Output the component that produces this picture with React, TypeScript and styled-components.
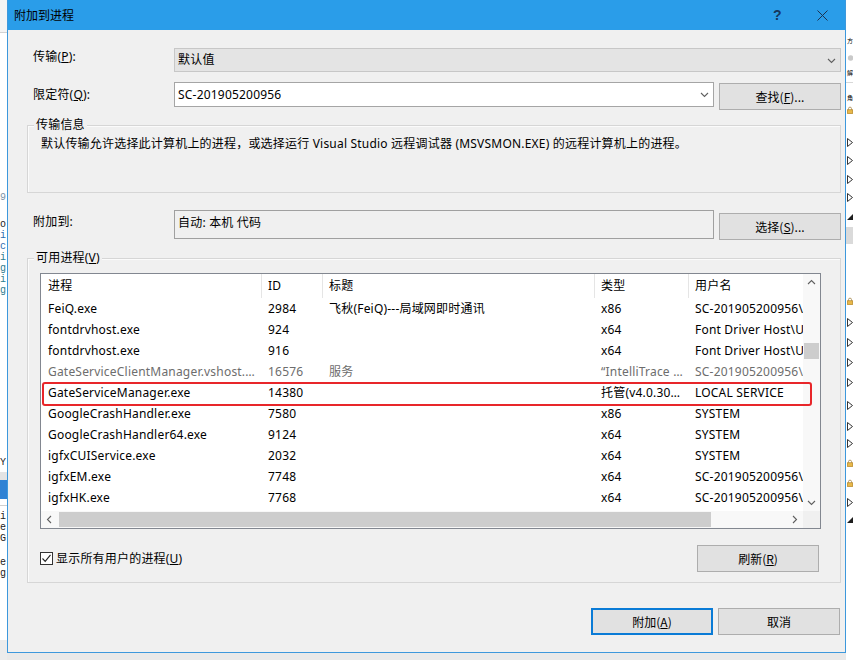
import React from "react";
import styled, { createGlobalStyle } from "styled-components";

const GlobalStyle = createGlobalStyle`
  html, body { margin: 0; padding: 0; }
  body {
    width: 853px;
    height: 660px;
    overflow: hidden;
    background: #e9e9e9;
    font-family: "Noto Sans", "Noto Sans CJK SC", sans-serif;
    font-size: 12px;
    line-height: 16px;
    letter-spacing: 0.2px;
    color: #000;
  }
`;

const Screen = styled.div`
  display: flex;
  align-items: flex-start;
  width: 853px;
  height: 660px;
`;

/* background windows peeking out on both sides */
const Strip = styled.div<{ $w: number }>`
  width: ${(p) => p.$w}px;
  height: 660px;
  background: #fff;
  overflow: hidden;
  display: flex;
  flex-direction: column;
  flex-shrink: 0;
`;

const StripBand = styled.div<{ $mt: number; $h: number; $bg: string }>`
  margin-top: ${(p) => p.$mt}px;
  height: ${(p) => p.$h}px;
  background: ${(p) => p.$bg};
  flex-shrink: 0;
`;

const CodeLine = styled.div<{ $mt: number; $h: number; $color: string }>`
  margin-top: ${(p) => p.$mt}px;
  height: ${(p) => p.$h}px;
  line-height: ${(p) => p.$h}px;
  font-family: "Liberation Mono", monospace;
  font-size: 10px;
  letter-spacing: 0;
  color: ${(p) => p.$color};
  white-space: nowrap;
  flex-shrink: 0;
`;

const TreeGlyph = styled.div<{ $mt: number; $h: number }>`
  margin-top: ${(p) => p.$mt}px;
  height: ${(p) => p.$h}px;
  display: flex;
  align-items: center;
  padding-left: 1px;
  font-family: "Noto Sans CJK SC", sans-serif;
  font-size: 6px;
  letter-spacing: 0;
  white-space: nowrap;
  flex-shrink: 0;
`;

const Dialog = styled.div`
  width: 839px;
  height: 653px;
  box-sizing: border-box;
  border: 1px solid #3d98dc;
  border-top: none;
  background: #f0f0f0;
  display: flex;
  flex-direction: column;
  flex-shrink: 0;
`;

const TitleBar = styled.div`
  height: 30px;
  background: #2a9de9;
  display: flex;
  align-items: center;
`;

const TitleText = styled.div`
  flex: 1;
  padding-left: 6px;
  font-family: "Noto Sans CJK SC", sans-serif;
  font-size: 12px;
  letter-spacing: 0;
  color: #000;
`;

const CaptionButton = styled.div`
  width: 45px;
  height: 30px;
  display: flex;
  align-items: center;
  justify-content: center;
  color: #16365c;
  font-family: "Liberation Sans", sans-serif;
  font-weight: bold;
  font-size: 14px;
`;

const Body = styled.div`
  display: flex;
  flex-direction: column;
  padding: 0 4px 0 19px;
`;

const FieldRow = styled.div<{ $mt: number }>`
  display: flex;
  align-items: flex-start;
  margin-top: ${(p) => p.$mt}px;
  gap: 5px;
`;

const FieldLabel = styled.div<{ $mt: number }>`
  width: 136px;
  padding-left: 6px;
  margin-top: ${(p) => p.$mt}px;
  flex-shrink: 0;
`;

const Combo = styled.div<{ $disabled?: boolean; $h: number }>`
  flex: 1;
  height: ${(p) => p.$h}px;
  box-sizing: border-box;
  border: 1px solid ${(p) => (p.$disabled ? "#c7c7c7" : "#a5a5a5")};
  background: ${(p) => (p.$disabled ? "#e4e4e4" : "#fff")};
  display: flex;
  align-items: center;
  justify-content: space-between;
  padding: 0 4px 0 3px;
`;

const ReadOnlyBox = styled.div`
  flex: 1;
  height: 29px;
  box-sizing: border-box;
  border: 1px solid #a0a0a0;
  background: #f0f0f0;
  padding: 4px 3px;
`;

const Button = styled.div<{ $default?: boolean; $mt?: number }>`
  width: 122px;
  height: 27px;
  margin-top: ${(p) => p.$mt ?? 0}px;
  box-sizing: border-box;
  border: ${(p) => (p.$default ? "2px solid #0a7bd6" : "1px solid #adadad")};
  background: #e1e1e1;
  display: flex;
  align-items: center;
  justify-content: center;
  flex-shrink: 0;
  font-family: "Noto Sans CJK SC", sans-serif;
  letter-spacing: 0;
`;

const Key = styled.span`
  text-decoration: underline;
  text-underline-offset: 1px;
`;

const Group = styled.div<{ $mt: number; $h?: number }>`
  position: relative;
  margin-top: ${(p) => p.$mt}px;
  ${(p) => (p.$h ? `height: ${p.$h}px;` : "")}
  box-sizing: border-box;
  border: 1px solid #d6d6d6;
  box-shadow: inset 1px 1px 0 #fbfbfb;
`;

const Legend = styled.div`
  position: absolute;
  top: -9px;
  left: 6px;
  padding: 0 2px;
  background: #f0f0f0;
`;

const InfoText = styled.div`
  padding: 10px 0 0 13px;
`;

const ProcGroupInner = styled.div`
  display: flex;
  flex-direction: column;
  padding: 14px 19px 10px 12px;
`;

const ListBox = styled.div`
  position: relative;
  height: 256px;
  box-sizing: border-box;
  border: 1px solid #828790;
  background: #fff;
  display: grid;
  grid-template-columns: 1fr 17px;
  grid-template-rows: 1fr 17px;
`;

const ListContent = styled.div`
  overflow: hidden;
`;

const COLS = "220px 61px 272px 94px 115px";

const HeaderRow = styled.div`
  display: grid;
  grid-template-columns: ${COLS};
  height: 24px;
`;

const HeaderCell = styled.div<{ $sep: boolean }>`
  display: flex;
  align-items: center;
  padding-left: ${(p) => (p.$sep ? 6 : 7)}px;
  border-left: ${(p) => (p.$sep ? "1px solid #e5e5e5" : "none")};
  white-space: nowrap;
  overflow: hidden;
`;

const DataRow = styled.div<{ $dim?: boolean }>`
  display: grid;
  grid-template-columns: ${COLS};
  height: 21px;
  color: ${(p) => (p.$dim ? "#6d6d6d" : "#000")};
`;

const Cell = styled.div`
  display: flex;
  align-items: center;
  padding-left: 7px;
  white-space: nowrap;
  overflow: hidden;
`;

const VScroll = styled.div`
  background: #f8f8f8;
  display: flex;
  flex-direction: column;
  align-items: center;
`;

const HScroll = styled.div`
  background: #f8f8f8;
  display: flex;
  align-items: center;
`;

const ScrollArrow = styled.div`
  width: 17px;
  height: 17px;
  display: flex;
  align-items: center;
  justify-content: center;
  flex-shrink: 0;
`;

const VThumb = styled.div`
  margin-top: 52px;
  width: 15px;
  height: 16px;
  background: #cdcdcd;
`;

const HThumb = styled.div`
  margin-left: 1px;
  width: 652px;
  height: 15px;
  background: #cdcdcd;
`;

const Filler = styled.div`
  flex: 1;
`;

const Corner = styled.div`
  background: #f0f0f0;
`;

const Highlight = styled.div`
  position: absolute;
  left: 1px;
  top: 108px;
  width: 770px;
  height: 24px;
  box-sizing: border-box;
  border: 2px solid #e8262a;
  border-radius: 3px;
  pointer-events: none;
`;

const CheckRow = styled.div`
  display: flex;
  align-items: center;
  justify-content: space-between;
  margin-top: 16px;
  padding-right: 2px;
`;

const CheckLabel = styled.label`
  display: flex;
  align-items: center;
  gap: 3px;
`;

const CheckBox = styled.span`
  width: 13px;
  height: 13px;
  box-sizing: border-box;
  border: 1px solid #333;
  background: #fff;
  display: flex;
  align-items: center;
  justify-content: center;
`;

const ButtonBar = styled.div`
  display: flex;
  justify-content: flex-end;
  gap: 5px;
  margin-top: 25px;
  padding-right: 1px;
`;

const Chevron = ({ dir = "down" }: { dir?: "down" | "up" | "left" | "right" }) => {
  const rot = { down: 0, up: 180, left: 90, right: -90 }[dir];
  return (
    <svg width="9" height="9" viewBox="0 0 9 9" style={{ transform: `rotate(${rot}deg)` }}>
      <path d="M1 3 L4.5 6.5 L8 3" fill="none" stroke="#606060" strokeWidth="1.1" />
    </svg>
  );
};

const CloseIcon = () => (
  <svg width="11" height="11" viewBox="0 0 11 11">
    <path d="M0.5 0.5 L10.5 10.5 M10.5 0.5 L0.5 10.5" stroke="#1d3350" strokeWidth="1" />
  </svg>
);

const Tri = ({ filled }: { filled?: boolean }) =>
  filled ? (
    <svg width="6" height="6" viewBox="0 0 6 6">
      <path d="M6 0 L6 6 L0 6 Z" fill="#1e1e1e" />
    </svg>
  ) : (
    <svg width="6" height="9" viewBox="0 0 6 9">
      <path d="M0.5 0.5 L5.5 4.5 L0.5 8.5 Z" fill="#fff" stroke="#333" strokeWidth="1" />
    </svg>
  );

const Lock = () => (
  <svg width="8" height="9" viewBox="0 0 8 9">
    <rect x="0.5" y="3.5" width="7" height="5" fill="#e8b84a" stroke="#b98a2a" />
    <path d="M2 3.5 V2 a2 2 0 0 1 4 0 V3.5" fill="none" stroke="#a08040" />
  </svg>
);

type LeftItem = { y: number; h: number; text?: string; color: string };

const leftItems: LeftItem[] = [
  { y: 0, h: 32, color: "#f4f4f4" },
  { y: 32, h: 1, color: "#d2d2d2" },
  { y: 192, h: 11, text: "9", color: "#7d93a8" },
  { y: 219, h: 11, text: "o", color: "#222" },
  { y: 230, h: 11, text: "i", color: "#2b6cb0" },
  { y: 241, h: 11, text: "c", color: "#2b6cb0" },
  { y: 252, h: 11, text: "i", color: "#2e7d8f" },
  { y: 263, h: 11, text: "g", color: "#2e7d8f" },
  { y: 274, h: 11, text: "i", color: "#2e7d8f" },
  { y: 285, h: 11, text: "g", color: "#2e7d8f" },
  { y: 457, h: 11, text: "Y", color: "#222" },
  { y: 472, h: 8, color: "#e4e4e4" },
  { y: 480, h: 19, color: "#2f82d4" },
  { y: 505, h: 1, color: "#cfcfcf" },
  { y: 511, h: 11, text: "i", color: "#222" },
  { y: 522, h: 11, text: "e", color: "#222" },
  { y: 533, h: 11, text: "G", color: "#222" },
  { y: 557, h: 11, text: "e", color: "#222" },
  { y: 568, h: 11, text: "g", color: "#222" },
  { y: 640, h: 20, color: "#ececec" },
];

type RightItem = { y: number; h: number; kind: "text" | "tri" | "fill" | "lock" | "circle" | "band"; text?: string };

const rightItems: RightItem[] = [
  { y: 36, h: 10, kind: "text", text: "方" },
  { y: 52, h: 12, kind: "circle" },
  { y: 68, h: 10, kind: "text", text: "解" },
  { y: 82, h: 1, kind: "band" },
  { y: 93, h: 10, kind: "text", text: "角" },
  { y: 105, h: 10, kind: "lock" },
  { y: 137, h: 10, kind: "tri" },
  { y: 155, h: 10, kind: "tri" },
  { y: 174, h: 10, kind: "tri" },
  { y: 192, h: 10, kind: "tri" },
  { y: 212, h: 10, kind: "fill" },
  { y: 227, h: 17, kind: "band" },
  { y: 296, h: 10, kind: "lock" },
  { y: 317, h: 10, kind: "tri" },
  { y: 337, h: 10, kind: "tri" },
  { y: 357, h: 10, kind: "tri" },
  { y: 377, h: 10, kind: "tri" },
  { y: 400, h: 10, kind: "tri" },
  { y: 421, h: 10, kind: "tri" },
  { y: 438, h: 10, kind: "tri" },
  { y: 458, h: 10, kind: "lock" },
  { y: 478, h: 10, kind: "lock" },
  { y: 497, h: 10, kind: "tri" },
  { y: 515, h: 10, kind: "fill" },
];

function withGaps<T extends { y: number; h: number }>(items: T[]) {
  let bottom = 0;
  return items.map((it) => {
    const mt = it.y - bottom;
    bottom = it.y + it.h;
    return { ...it, mt };
  });
}

type Proc = { name: string; id: string; title: string; type: string; user: string; dim?: boolean };

const procs: Proc[] = [
  { name: "FeiQ.exe", id: "2984", title: "飞秋(FeiQ)---局域网即时通讯", type: "x86", user: "SC-201905200956\\Administrator" },
  { name: "fontdrvhost.exe", id: "924", title: "", type: "x64", user: "Font Driver Host\\UMFD-0" },
  { name: "fontdrvhost.exe", id: "916", title: "", type: "x64", user: "Font Driver Host\\UMFD-1" },
  { name: "GateServiceClientManager.vshost.…", id: "16576", title: "服务", type: "“IntelliTrace …", user: "SC-201905200956\\Administrator", dim: true },
  { name: "GateServiceManager.exe", id: "14380", title: "", type: "托管(v4.0.30…", user: "LOCAL SERVICE" },
  { name: "GoogleCrashHandler.exe", id: "7580", title: "", type: "x86", user: "SYSTEM" },
  { name: "GoogleCrashHandler64.exe", id: "9124", title: "", type: "x64", user: "SYSTEM" },
  { name: "igfxCUIService.exe", id: "2032", title: "", type: "x64", user: "SYSTEM" },
  { name: "igfxEM.exe", id: "7748", title: "", type: "x64", user: "SC-201905200956\\Administrator" },
  { name: "igfxHK.exe", id: "7768", title: "", type: "x64", user: "SC-201905200956\\Administrator" },
];

const headers = ["进程", "ID", "标题", "类型", "用户名"];

export default function App() {
  return (
    <>
      <GlobalStyle />
      <Screen>
        <Strip $w={7}>
          {withGaps(leftItems).map((it, i) =>
            it.text ? (
              <CodeLine key={i} $mt={it.mt} $h={it.h} $color={it.color}>
                {it.text}
              </CodeLine>
            ) : (
              <StripBand key={i} $mt={it.mt} $h={it.h} $bg={it.color} />
            )
          )}
        </Strip>

        <Dialog>
          <TitleBar>
            <TitleText>附加到进程</TitleText>
            <CaptionButton>?</CaptionButton>
            <CaptionButton>
              <CloseIcon />
            </CaptionButton>
          </TitleBar>

          <Body>
            <FieldRow $mt={18}>
              <FieldLabel $mt={1}>
                传输(<Key>P</Key>):
              </FieldLabel>
              <Combo $disabled $h={24}>
                <span>默认值</span>
                <Chevron />
              </Combo>
            </FieldRow>

            <FieldRow $mt={10}>
              <FieldLabel $mt={5}>
                限定符(<Key>Q</Key>):
              </FieldLabel>
              <Combo $h={25}>
                <span>SC-201905200956</span>
                <Chevron />
              </Combo>
              <Button $mt={1}>
                查找(<Key>F</Key>)...
              </Button>
            </FieldRow>

            <Group $mt={15} $h={68}>
              <Legend>传输信息</Legend>
              <InfoText>
                默认传输允许选择此计算机上的进程，或选择运行 Visual Studio 远程调试器 (MSVSMON.EXE) 的远程计算机上的进程。
              </InfoText>
            </Group>

            <FieldRow $mt={17}>
              <FieldLabel $mt={4}>附加到:</FieldLabel>
              <ReadOnlyBox>自动: 本机 代码</ReadOnlyBox>
              <Button $mt={3}>
                选择(<Key>S</Key>)...
              </Button>
            </FieldRow>

            <Group $mt={18}>
              <Legend>
                可用进程(<Key>V</Key>)
              </Legend>
              <ProcGroupInner>
                <ListBox>
                  <ListContent>
                    <HeaderRow>
                      {headers.map((h, i) => (
                        <HeaderCell key={h} $sep={i > 0}>
                          {h}
                        </HeaderCell>
                      ))}
                    </HeaderRow>
                    {procs.map((p, i) => (
                      <DataRow key={i} $dim={p.dim}>
                        <Cell>{p.name}</Cell>
                        <Cell>{p.id}</Cell>
                        <Cell>{p.title}</Cell>
                        <Cell>{p.type}</Cell>
                        <Cell>{p.user}</Cell>
                      </DataRow>
                    ))}
                  </ListContent>
                  <VScroll>
                    <ScrollArrow>
                      <Chevron dir="up" />
                    </ScrollArrow>
                    <VThumb />
                    <Filler />
                    <ScrollArrow>
                      <Chevron />
                    </ScrollArrow>
                  </VScroll>
                  <HScroll>
                    <ScrollArrow>
                      <Chevron dir="left" />
                    </ScrollArrow>
                    <HThumb />
                    <Filler />
                    <ScrollArrow>
                      <Chevron dir="right" />
                    </ScrollArrow>
                  </HScroll>
                  <Corner />
                  <Highlight />
                </ListBox>

                <CheckRow>
                  <CheckLabel>
                    <CheckBox>
                      <svg width="11" height="11" viewBox="0 0 11 11">
                        <path d="M1.5 5.5 L4.2 8.3 L9.5 1.8" fill="none" stroke="#222" strokeWidth="1.1" />
                      </svg>
                    </CheckBox>
                    <span>
                      显示所有用户的进程(<Key>U</Key>)
                    </span>
                  </CheckLabel>
                  <Button>
                    刷新(<Key>R</Key>)
                  </Button>
                </CheckRow>
              </ProcGroupInner>
            </Group>

            <ButtonBar>
              <Button $default>
                附加(<Key>A</Key>)
              </Button>
              <Button>取消</Button>
            </ButtonBar>
          </Body>
        </Dialog>

        <Strip $w={7}>
          {withGaps(rightItems).map((it, i) => {
            if (it.kind === "band")
              return <StripBand key={i} $mt={it.mt} $h={it.h} $bg={it.h > 1 ? "#dadada" : "#d8d8d8"} />;
            return (
              <TreeGlyph key={i} $mt={it.mt} $h={it.h}>
                {it.kind === "text" && it.text}
                {it.kind === "tri" && <Tri />}
                {it.kind === "fill" && <Tri filled />}
                {it.kind === "lock" && <Lock />}
                {it.kind === "circle" && (
                  <svg width="10" height="10" viewBox="0 0 10 10">
                    <circle cx="6" cy="5" r="4.5" fill="#c9c9c9" />
                  </svg>
                )}
              </TreeGlyph>
            );
          })}
        </Strip>
      </Screen>
    </>
  );
}
